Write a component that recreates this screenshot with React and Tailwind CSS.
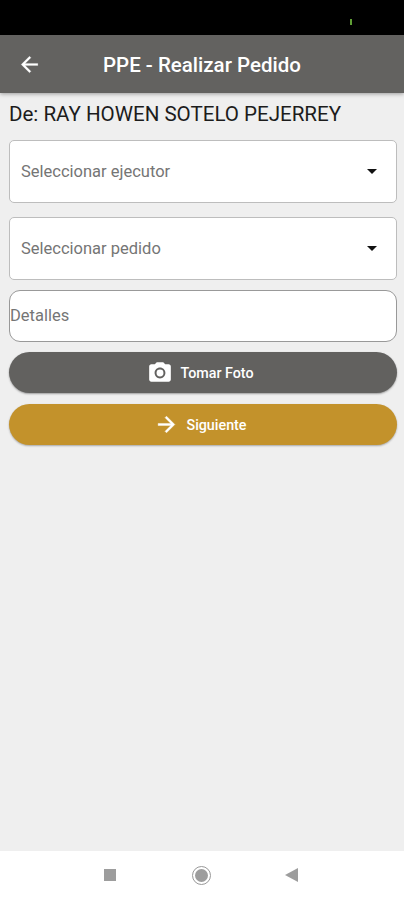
function ArrowBack() {
  return (
    <svg viewBox="0 0 24 24" className="size-[25px]" fill="#fff" stroke="#fff" strokeWidth="0.2">
      <path d="M20 11H7.83l5.59-5.59L12 4l-8 8 8 8 1.41-1.41L7.83 13H20v-2z" />
    </svg>
  );
}

function ArrowForward() {
  return (
    <svg viewBox="0 0 24 24" className="size-[25px] shrink-0" fill="#fff" stroke="#fff" strokeWidth="0.4">
      <path d="M12 4l-1.41 1.41L16.17 11H4v2h12.17l-5.58 5.59L12 20l8-8z" />
    </svg>
  );
}

function Camera() {
  return (
    <svg viewBox="0 0 24 24" className="size-[26px] shrink-0" fill="#fff">
      <circle cx="12" cy="12" r="3.2" />
      <path d="M9 2L7.17 4H4c-1.1 0-2 .9-2 2v12c0 1.1.9 2 2 2h16c1.1 0 2-.9 2-2V6c0-1.1-.9-2-2-2h-3.17L15 2H9zm3 15c-2.76 0-5-2.24-5-5s2.24-5 5-5 5 2.24 5 5-2.24 5-5 5z" />
    </svg>
  );
}

function Select({ label }) {
  return (
    <div className="flex h-[63px] items-center justify-between rounded-[5px] border border-[#bdbdbd] bg-white pl-[11px] pr-[19px]">
      <span className="pt-px text-[16.5px] text-[#757575]">{label}</span>
      <svg viewBox="0 0 10 5" className="h-[5px] w-[10px]" fill="#111">
        <path d="M0 0h10L5 5z" />
      </svg>
    </div>
  );
}

export default function App() {
  return (
    <div className="flex h-[900px] w-[404px] flex-col overflow-hidden bg-[#efefef] font-[Roboto,sans-serif]">
      <div className="flex h-[35px] shrink-0 justify-end bg-black pr-[52px] pt-[19px]">
        <span className="h-[6px] w-[2px] bg-[#5f9e35]" />
      </div>
      <header className="z-10 flex h-[58px] shrink-0 items-center bg-[#636260] pl-[17px] shadow-[0_1px_4px_rgba(0,0,0,0.35)]">
        <ArrowBack />
        <h1 className="ml-[61px] pt-[3px] text-[20.5px] font-medium whitespace-nowrap text-white">PPE - Realizar Pedido</h1>
      </header>
      <main className="flex flex-1 flex-col pl-[9px] pr-[7px]">
        <p className="flex h-[47px] items-center pb-[5px] text-[20.6px] font-normal tracking-[-0.03px] whitespace-nowrap text-[#1c1c1c]">
          De: RAY HOWEN SOTELO PEJERREY
        </p>
        <div className="flex flex-col gap-[14px]">
          <Select label="Seleccionar ejecutor" />
          <Select label="Seleccionar pedido" />
        </div>
        <div className="mt-[10px] flex h-[52px] items-center rounded-[11px] border border-[#999] bg-white text-[16.5px] text-[#757575]">
          Detalles
        </div>
        <button className="mt-[10px] flex h-[41px] items-center justify-center gap-[7px] rounded-full bg-[#62615f] pr-[5px] text-[14.3px] font-medium text-white shadow-[0_1px_2px_rgba(0,0,0,0.35)]">
          <Camera />
          <span className="pt-[2px]">Tomar Foto</span>
        </button>
        <button className="mt-[11px] flex h-[41px] items-center justify-center gap-[7px] rounded-full bg-[#c3922b] pr-[5px] text-[14.3px] font-medium text-white shadow-[0_1px_2px_rgba(0,0,0,0.3)]">
          <ArrowForward />
          <span className="pt-[2px]">Siguiente</span>
        </button>
      </main>
      <nav className="flex h-[49px] shrink-0 items-center bg-white pb-px pl-[104px]">
        <span className="size-[12px] bg-[#9d9d9d]" />
        <span className="ml-[76px] flex size-[19px] items-center justify-center rounded-full border border-[#999]">
          <span className="size-[13px] rounded-full bg-[#9d9d9d]" />
        </span>
        <svg viewBox="0 0 13 14" className="ml-[74px] h-[14px] w-[13px]" fill="#9d9d9d">
          <path d="M13 0v14L0 7z" />
        </svg>
      </nav>
    </div>
  );
}
